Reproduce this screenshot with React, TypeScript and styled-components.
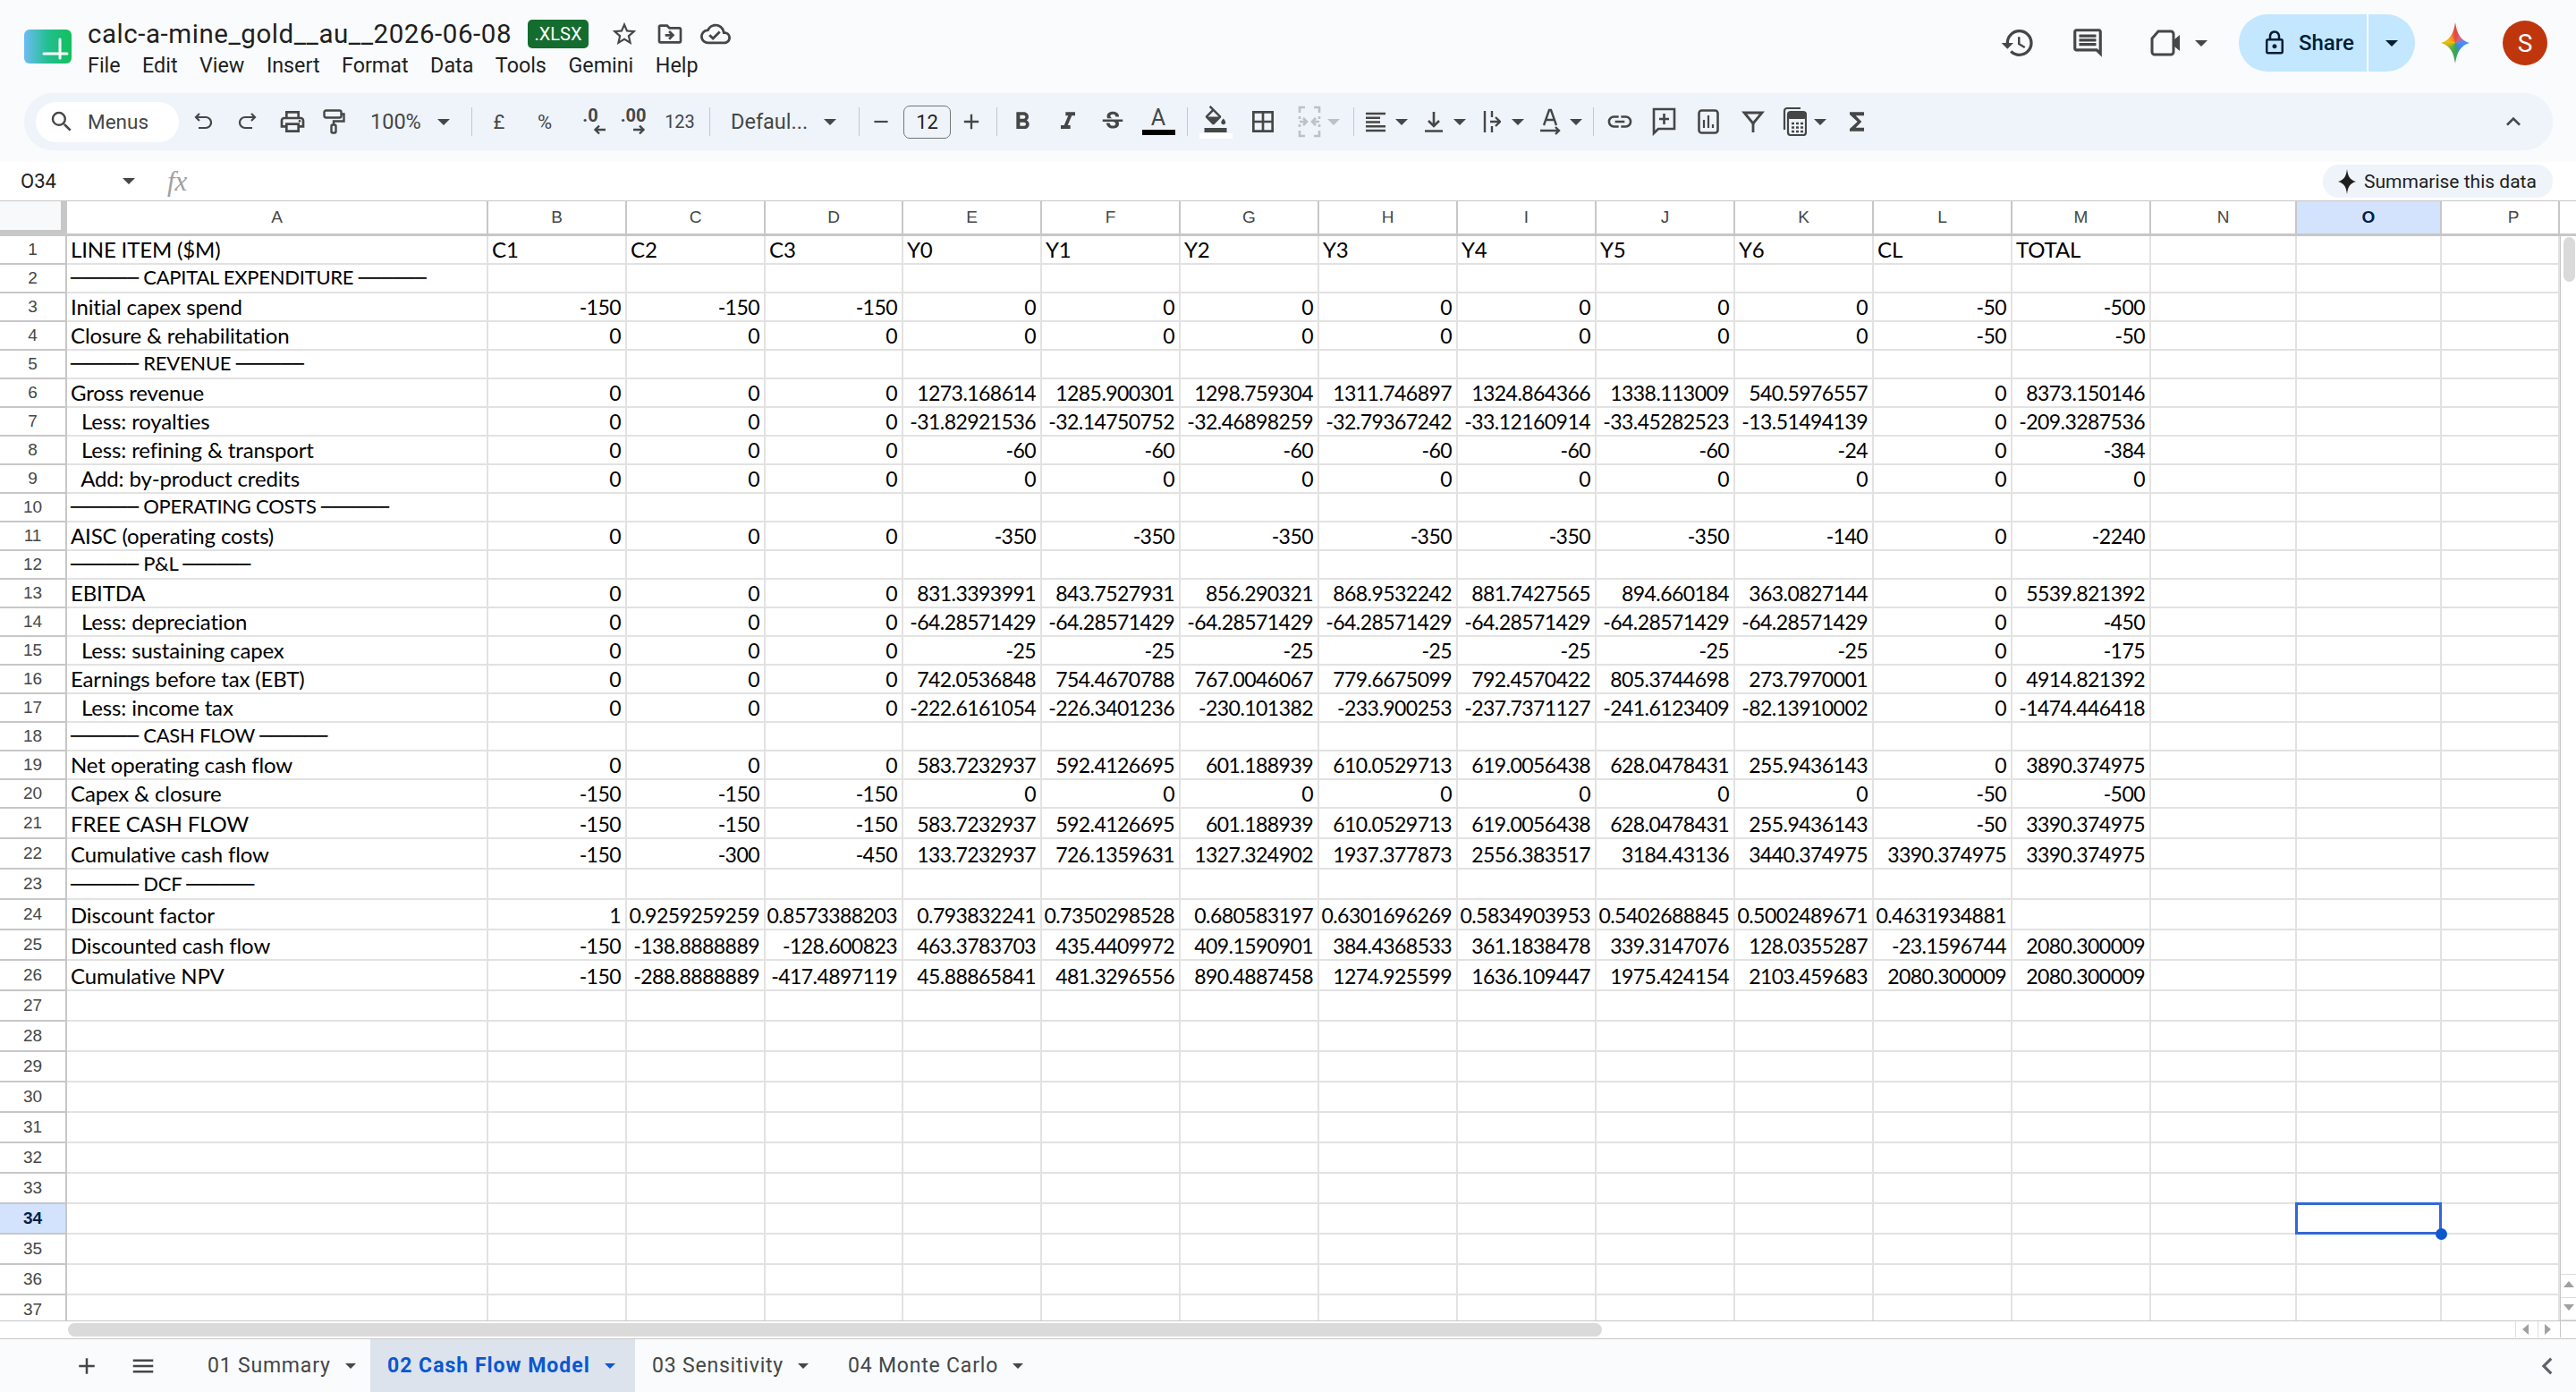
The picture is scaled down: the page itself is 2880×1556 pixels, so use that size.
import React from "react";
import styled, { createGlobalStyle } from "styled-components";
import {
  MdAdd,
  MdBorderAll,
  MdChevronLeft,
  MdFormatBold,
  MdFormatColorFill,
  MdFormatItalic,
  MdFunctions,
  MdHistory,
  MdKeyboardArrowUp,
  MdLink,
  MdMenu,
  MdOutlineCloudDone,
  MdOutlineComment,
  MdOutlineDriveFileMove,
  MdOutlineLock,
  MdOutlinePrint,
  MdRemove,
  MdSearch,
  MdStarBorder,
  MdStrikethroughS,
} from "react-icons/md";

const GlobalStyle = createGlobalStyle`
  html, body {
    margin: 0;
    padding: 0;
    background: #ffffff;
  }
  * {
    box-sizing: border-box;
  }
`;

const uiFont = `Roboto, "Liberation Sans", sans-serif`;
const cellFont = `Lato, "DejaVu Sans", sans-serif`;
const headFont = `"Liberation Sans", Arial, sans-serif`;

const Page = styled.div`
  width: 2880px;
  height: 1556px;
  display: flex;
  flex-direction: column;
  overflow: hidden;
  font-family: ${uiFont};
  color: #444746;
`;

const TopBand = styled.header`
  height: 181px;
  background: #f9fbfd;
  display: flex;
  flex-direction: column;
`;

const TitleBar = styled.div`
  height: 104px;
  padding: 0 32px 0 27px;
  display: flex;
  align-items: center;
`;

const TitleText = styled.div`
  margin-left: 18px;
  display: flex;
  flex-direction: column;
  margin-top: 6px;
`;

const TitleRow = styled.div`
  display: flex;
  align-items: center;
  height: 32px;
`;

const FileName = styled.span`
  font-size: 29.5px;
  color: #1f1f1f;
  letter-spacing: 0.55px;
  width: 492px;
  white-space: nowrap;
`;

const Badge = styled.span`
  width: 68px;
  height: 32px;
  border-radius: 5px;
  background: #146c2e;
  color: #ffffff;
  font-size: 20px;
  display: flex;
  align-items: center;
  justify-content: center;
`;

const RowIcon = styled.span<{ $ml: number }>`
  margin-left: ${(p) => p.$ml}px;
  display: flex;
  color: #444746;
`;

const MenuBar = styled.nav`
  display: flex;
  gap: 24.5px;
  height: 30px;
  margin-top: 4px;
  align-items: center;
  font-size: 23.3px;
  color: #1f1f1f;
`;

const HeadRight = styled.div`
  margin-left: auto;
  display: flex;
  align-items: center;
  margin-top: -8px;
`;

const HeadBtn = styled.span<{ $ml?: number }>`
  width: 50px;
  height: 50px;
  margin-left: ${(p) => p.$ml || 0}px;
  display: flex;
  align-items: center;
  justify-content: center;
  color: #444746;
`;

const VideoCombo = styled.span`
  margin-left: 45px;
  display: flex;
  align-items: center;
  gap: 17px;
  color: #444746;
`;

const Caret = styled.i<{ $c?: string; $s?: number }>`
  display: block;
  flex: none;
  width: 0;
  height: 0;
  border-left: ${(p) => p.$s || 7}px solid transparent;
  border-right: ${(p) => p.$s || 7}px solid transparent;
  border-top: ${(p) => p.$s || 7}px solid ${(p) => p.$c || "#444746"};
`;

const SharePill = styled.div`
  margin-left: 35px;
  width: 197px;
  height: 64px;
  border-radius: 32px;
  background: #c2e7ff;
  color: #001d35;
  display: flex;
  align-items: center;
`;

const ShareMain = styled.span`
  width: 145px;
  height: 64px;
  display: flex;
  align-items: center;
  padding-left: 25px;
  gap: 12px;
  font-size: 24px;
  font-weight: 500;
  border-right: 2px solid #f9fbfd;
`;

const ShareDrop = styled.span`
  flex: 1;
  display: flex;
  justify-content: center;
`;

const GeminiStar = styled.span`
  display: block;
  margin-left: 29px;
  width: 32px;
  height: 46px;
  flex: none;
  background: conic-gradient(#e8453c 0deg, #e0607a 40deg, #4a90f5 90deg, #4285f4 130deg, #34a853 180deg, #7cb342 230deg, #fbbc04 280deg, #f28b30 330deg, #e8453c 360deg);
  clip-path: path("M16 0C18 13 22 20 32 23 22 26 18 33 16 46 14 33 10 26 0 23 10 20 14 13 16 0Z");
`;

const Avatar = styled.span`
  margin-left: 37px;
  width: 50px;
  height: 50px;
  border-radius: 50%;
  background: #bf360c;
  color: #ffffff;
  font-size: 28px;
  display: flex;
  align-items: center;
  justify-content: center;
`;

const Toolbar = styled.div`
  margin: 0 26px 0 27px;
  height: 64px;
  border-radius: 32px;
  background: #eff3fa;
  padding: 0 24px 0 13px;
  display: flex;
  align-items: center;
`;

const MenusBox = styled.div`
  width: 160px;
  height: 45px;
  border-radius: 23px;
  background: #ffffff;
  margin-right: 2px;
  display: flex;
  align-items: center;
  padding-left: 14px;
  gap: 14px;
  font-size: 22.5px;
  color: #444746;
`;

const Tool = styled.span<{ $w: number }>`
  width: ${(p) => p.$w}px;
  height: 48px;
  flex: none;
  display: flex;
  flex-direction: column;
  align-items: center;
  justify-content: center;
  color: #444746;
  font-size: 22px;
`;

const Combo = styled.span<{ $w: number; $pl: number; $gap?: number }>`
  width: ${(p) => p.$w}px;
  height: 48px;
  flex: none;
  display: flex;
  align-items: center;
  padding-left: ${(p) => p.$pl}px;
  gap: ${(p) => p.$gap ?? 10}px;
  color: #444746;
  font-size: 23.5px;
`;

const Slot = styled.span`
  width: 24px;
  display: flex;
  justify-content: center;
  flex: none;
`;

const Sep = styled.span<{ $ml: number; $mr: number }>`
  width: 1px;
  height: 32px;
  flex: none;
  background: #c7c7c7;
  margin: 0 ${(p) => p.$mr}px 0 ${(p) => p.$ml}px;
`;

const SizeBox = styled.span`
  width: 53px;
  height: 37px;
  flex: none;
  margin: 0 7px 0 9px;
  border: 1.5px solid #747775;
  border-radius: 7px;
  display: flex;
  align-items: center;
  justify-content: center;
  font-size: 22px;
  color: #1f1f1f;
`;

const DecimalStack = styled.span`
  display: flex;
  flex-direction: column;
  align-items: flex-end;
  font-size: 20px;
  font-weight: 700;
  line-height: 20px;
  margin-top: -2px;
  color: #444746;
`;

const SmallNum = styled.span`
  font-size: 20px;
`;

const ColorLetter = styled.span`
  font-size: 25px;
  line-height: 24px;
  margin-top: -2px;
`;

const ColorBar = styled.span<{ $bg: string }>`
  display: block;
  width: 37px;
  height: 6px;
  margin-top: 1px;
  background: ${(p) => p.$bg};
`;

const Chevron = styled.span`
  margin-left: auto;
  width: 40px;
  display: flex;
  justify-content: center;
  color: #444746;
`;

const FormulaBar = styled.div`
  height: 44px;
  background: #ffffff;
  padding: 0 26px 0 23px;
  border-bottom: 1.5px solid #c7c7c7;
  display: flex;
  align-items: center;
  flex: none;
`;

const NameBox = styled.span`
  width: 114px;
  font-size: 22px;
  color: #1f1f1f;
`;

const FxMark = styled.span`
  margin-left: 36px;
  font-family: "Liberation Serif", serif;
  font-style: italic;
  font-size: 31px;
  color: #a0a0a0;
`;

const SummaryChip = styled.span`
  margin-left: auto;
  width: 257px;
  height: 37px;
  border-radius: 18px;
  background: #eff3fa;
  display: flex;
  align-items: center;
  padding-left: 17px;
  gap: 9px;
  font-size: 21px;
  color: #1f1f1f;
  white-space: nowrap;
`;

const columns = "75px 471px 155px 155px 154px 155px 155px 155px 155px 155px 155px 155px 155px 155px 163px 162px 132px";

const ColHeader = styled.div`
  height: 39px;
  flex: none;
  display: flex;
  background: #ffffff;
  border-bottom: 3px solid #c7c7c7;
`;

const ColGrid = styled.div`
  display: grid;
  grid-template-columns: ${columns};
`;

const ColCell = styled.div<{ $sel?: boolean; $pl?: number }>`
  display: flex;
  align-items: center;
  justify-content: center;
  padding-left: ${(p) => p.$pl || 0}px;
  border-right: 2px solid #c7c7c7;
  font-family: ${headFont};
  font-size: 19px;
  color: ${(p) => (p.$sel ? "#041e49" : "#444746")};
  font-weight: ${(p) => (p.$sel ? 700 : 400)};
  background: ${(p) => (p.$sel ? "#d3e3fd" : "#ffffff")};
`;

const Corner = styled.div`
  background: #f8f9fa;
  border-right: 7px solid #c7c7c7;
  margin-bottom: -3px;
  border-bottom: 7px solid #c7c7c7;
`;

const Body = styled.div`
  height: 1212px;
  flex: none;
  display: flex;
  overflow: hidden;
  background: #ffffff;
`;

const Rows = styled.div`
  width: 2862px;
  flex: none;
`;

const Row = styled.div<{ $h: number }>`
  display: grid;
  grid-template-columns: ${columns};
  height: ${(p) => p.$h}px;
`;

const RowNum = styled.div<{ $sel?: boolean }>`
  display: flex;
  align-items: center;
  justify-content: center;
  font-family: ${headFont};
  font-size: 19px;
  color: ${(p) => (p.$sel ? "#041e49" : "#444746")};
  font-weight: ${(p) => (p.$sel ? 700 : 400)};
  background: ${(p) => (p.$sel ? "#d3e3fd" : "#ffffff")};
  border-right: 2px solid #c7c7c7;
  border-bottom: 2px solid #c7c7c7;
`;

const Cell = styled.div<{ $right?: boolean; $overflow?: boolean; $num?: boolean }>`
  position: relative;
  display: flex;
  align-items: flex-end;
  justify-content: ${(p) => (p.$right ? "flex-end" : "flex-start")};
  padding: 0 5px 1px 4px;
  border-right: 2px solid #e2e2e2;
  border-bottom: 2px solid #e2e2e2;
  font-family: ${cellFont};
  font-size: ${(p) => (p.$num ? 23 : 24)}px;
  letter-spacing: ${(p) => (p.$num ? -0.55 : -0.15)}px;
  line-height: 28px;
  color: #000000;
  white-space: pre;
  overflow: ${(p) => (p.$overflow ? "visible" : "hidden")};
`;

const SectionTitle = styled.span`
  font-size: 22px;
  letter-spacing: -0.25px;
`;

const Dash = styled.span`
  font-family: "DejaVu Sans", sans-serif;
  font-size: 21px;
  letter-spacing: 0;
`;

const Selection = styled.span`
  position: absolute;
  left: -2px;
  top: -2px;
  right: -2px;
  bottom: -2px;
  border: 3px solid #3367d6;
  z-index: 2;
`;

const Handle = styled.span`
  position: absolute;
  right: -8px;
  bottom: -8px;
  width: 13px;
  height: 13px;
  border-radius: 50%;
  background: #0b57d0;
  z-index: 3;
`;

const VScroll = styled.div`
  flex: 1;
  position: relative;
  border-left: 1.5px solid #c7c7c7;
  background: #ffffff;
`;

const VThumb = styled.span`
  position: absolute;
  left: 3px;
  top: 1px;
  width: 13px;
  height: 50px;
  border-radius: 7px;
  background: #dadada;
`;

const VArrows = styled.span`
  position: absolute;
  left: 0;
  right: 0;
  bottom: 0;
  height: 52px;
  border-top: 1px solid #dadce0;
  display: flex;
  flex-direction: column;
`;

const ArrowCell = styled.span`
  flex: 1;
  display: flex;
  align-items: center;
  justify-content: center;
  border-bottom: 1px solid #dadce0;
`;

const HScroll = styled.div`
  height: 21px;
  flex: none;
  position: relative;
  border-top: 1.5px solid #c7c7c7;
  border-bottom: 1.5px solid #c7c7c7;
  background: #ffffff;
`;

const HThumb = styled.span`
  position: absolute;
  left: 76px;
  top: 2px;
  width: 1715px;
  height: 15px;
  border-radius: 8px;
  background: #dadada;
`;

const HArrows = styled.span`
  position: absolute;
  left: 2812px;
  top: 0;
  width: 51px;
  height: 18px;
  display: flex;
  border-left: 1px solid #dadce0;
  border-right: 1px solid #c7c7c7;
`;

const HArrow = styled.span`
  flex: 1;
  display: flex;
  align-items: center;
  justify-content: center;
  & + & {
    border-left: 1px solid #dadce0;
  }
`;

const TabBar = styled.footer`
  flex: 1;
  background: #f9fbfd;
  display: flex;
  align-items: stretch;
  padding-left: 80px;
  color: #444746;
`;

const TabTool = styled.span<{ $w: number }>`
  width: ${(p) => p.$w}px;
  flex: none;
  display: flex;
  align-items: center;
  justify-content: center;
  color: #444746;
`;

const Tab = styled.span<{ $active?: boolean; $w: number; $pl: number }>`
  width: ${(p) => p.$w}px;
  flex: none;
  display: flex;
  align-items: center;
  padding-left: ${(p) => p.$pl}px;
  gap: 16px;
  font-size: 23px;
  letter-spacing: ${(p) => (p.$active ? 1 : 0.8)}px;
  white-space: nowrap;
  font-weight: ${(p) => (p.$active ? 700 : 400)};
  color: ${(p) => (p.$active ? "#0b57d0" : "#444746")};
  background: ${(p) => (p.$active ? "#dce3ec" : "transparent")};
`;

const TabEnd = styled.span`
  margin-left: auto;
  width: 64px;
  display: flex;
  align-items: center;
  justify-content: center;
  color: #5f6368;
`;

const ink = "#444746";

const SheetsLogo = () => (
  <svg width="53" height="38" viewBox="0 0 53 38" style={{ flex: "none" }}>
    <defs>
      <linearGradient id="sheetGrad" x1="0" y1="0" x2="1" y2="0">
        <stop offset="0" stopColor="#6dbcf3" />
        <stop offset="0.5" stopColor="#22bf90" />
        <stop offset="1" stopColor="#12c05a" />
      </linearGradient>
    </defs>
    <rect width="53" height="38" rx="6" fill="url(#sheetGrad)" />
    <path d="M22 27h26M40 11v21" stroke="#fff" strokeWidth="3" fill="none" strokeLinecap="round" />
  </svg>
);

const VideoIcon = () => (
  <svg width="33" height="30" viewBox="0 0 33 30" style={{ flex: "none" }}>
    <path d="M9 2h14a3 3 0 0 1 3 3v20a3 3 0 0 1-3 3H5a3 3 0 0 1-3-3V10Z" fill="none" stroke={ink} strokeWidth="3" />
    <path d="M26 12l7-6v18l-7-6Z" fill={ink} />
  </svg>
);

const Spark = () => (
  <svg width="20" height="28" viewBox="0 0 20 28" style={{ flex: "none" }}>
    <path d="M10 0C11 8 13 12 20 14 13 16 11 20 10 28 9 20 7 16 0 14 7 12 9 8 10 0Z" fill="#1f1f1f" />
  </svg>
);

const UndoIcon = ({ flip }: { flip?: boolean }) => (
  <svg width="20" height="20" viewBox="0 0 20 20" fill="none" stroke={ink} strokeWidth="2.2" style={flip ? { transform: "scaleX(-1)" } : undefined}>
    <path d="M6 1 2 5l4 4M2 5h11a5.5 5.5 0 0 1 0 12H5" />
  </svg>
);

const PaintIcon = () => (
  <svg width="25" height="28" viewBox="0 0 25 28" fill="none" stroke={ink} strokeWidth="2.4">
    <rect x="1.5" y="1.5" width="19" height="8" rx="2" />
    <path d="M21 5.5h2.5v8H12v4" />
    <rect x="9.5" y="17.5" width="5" height="9" rx="1.5" />
  </svg>
);

const ArrowUnder = ({ left }: { left?: boolean }) => (
  <svg width="14" height="12" viewBox="0 0 14 12" style={left ? { marginRight: -8 } : undefined}>
    <path d={left ? "M14 6H3M7 1.5 2.5 6 7 10.5" : "M0 6h11M7 1.5 11.5 6 7 10.5"} stroke={ink} strokeWidth="2.4" fill="none" />
  </svg>
);

const MergeIcon = () => (
  <svg width="26" height="36" viewBox="0 0 26 36" fill="none" stroke="#bdc1c6" strokeWidth="2.6" style={{ flex: "none" }}>
    <path d="M8 2H2v6M18 2h6v6M8 34H2v-6M18 34h6v-6" />
    <path d="M2 18h7M6 14l4 4-4 4M24 18h-7M20 14l-4 4 4 4" />
    <path d="M2 12v3M24 12v3M2 21v3M24 21v3" />
  </svg>
);

const AlignIcon = () => (
  <svg width="24" height="23" viewBox="0 0 24 23" fill="none" stroke={ink} strokeWidth="2.6">
    <path d="M1 2h22M1 6.8h16M1 11.5h16M1 16.2h22M1 21h22" />
  </svg>
);

const ValignIcon = () => (
  <svg width="20" height="24" viewBox="0 0 20 24" fill="none" stroke={ink} strokeWidth="2.6">
    <path d="M10 1v16M4 11l6 6 6-6M0 22.5h20" />
  </svg>
);

const WrapIcon = () => (
  <svg width="20" height="26" viewBox="0 0 20 26" fill="none" stroke={ink} strokeWidth="2.4">
    <path d="M2 1v24M10 1v7M10 18v7M8 13h10M14 8l5 5-5 5" />
  </svg>
);

const RotateIcon = () => (
  <svg width="24" height="30" viewBox="0 0 24 30" fill="none" stroke={ink} strokeWidth="2.4">
    <path d="M5 19 11 2h2l6 17M7.5 13h9" />
    <path d="M1 25h21M18 21l4 4-4 4" />
  </svg>
);

const AddCommentIcon = () => (
  <svg width="27" height="32" viewBox="0 0 27 32" fill="none" stroke={ink} strokeWidth="2.6">
    <path d="M2 2h23v22H7l-5 5Z" />
    <path d="M13.5 7v12M8 13h11" />
  </svg>
);

const ChartIcon = () => (
  <svg width="24" height="28" viewBox="0 0 24 28" fill="none" stroke={ink} strokeWidth="2.6">
    <rect x="1.5" y="1.5" width="21" height="25" rx="3" />
    <path d="M7 21v-9M12 21V7M17 21v-4" strokeWidth="2.2" />
  </svg>
);

const FilterIcon = () => (
  <svg width="26" height="26" viewBox="0 0 26 26" fill="none" stroke={ink} strokeWidth="2.8">
    <path d="M3 3h20L13 15Z" />
    <path d="M13 15v10" />
  </svg>
);

const CalcIcon = () => (
  <svg width="27" height="32" viewBox="0 0 27 32" fill="none" stroke={ink} strokeWidth="2.2" style={{ flex: "none" }}>
    <path d="M2 25V4a3 3 0 0 1 3-3h15" />
    <rect x="6" y="5" width="20" height="26" rx="3" />
    <rect x="6" y="5" width="20" height="8" rx="2" fill={ink} stroke="none" />
    <path d="M10 18h3M15 18h3M20 18h3M10 22.5h3M15 22.5h3M20 22.5h3M10 27h3M15 27h3M20 27h3" strokeWidth="2.6" />
  </svg>
);

const TextColorIcon = () => (
  <>
    <ColorLetter>A</ColorLetter>
    <ColorBar $bg="#000000" />
  </>
);

const ArrowTri = ({ dir }: { dir: "up" | "down" | "left" | "right" }) => {
  const d = {
    up: "M0 8 6 1l6 7Z",
    down: "M0 1h12L6 8Z",
    left: "M8 0v12L1 6Z",
    right: "M1 0v12l7-6Z",
  }[dir];
  return (
    <svg width="12" height="12" viewBox="0 0 12 12">
      <path d={d} fill="#a0a0a0" />
    </svg>
  );
};

const colLetters = ["A", "B", "C", "D", "E", "F", "G", "H", "I", "J", "K", "L", "M", "N", "O", "P"];

type Line = { label: string; values?: (string | number)[]; text?: boolean; section?: boolean };

const sheet: Line[] = [
  { label: "LINE ITEM ($M)", text: true, values: ["C1", "C2", "C3", "Y0", "Y1", "Y2", "Y3", "Y4", "Y5", "Y6", "CL", "TOTAL"] },
  { label: "CAPITAL EXPENDITURE", section: true },
  { label: "Initial capex spend", values: [-150, -150, -150, 0, 0, 0, 0, 0, 0, 0, -50, -500] },
  { label: "Closure & rehabilitation", values: [0, 0, 0, 0, 0, 0, 0, 0, 0, 0, -50, -50] },
  { label: "REVENUE", section: true },
  { label: "Gross revenue", values: [0, 0, 0, 1273.168614, 1285.900301, 1298.759304, 1311.746897, 1324.864366, 1338.113009, 540.5976557, 0, 8373.150146] },
  { label: "  Less: royalties", values: [0, 0, 0, -31.82921536, -32.14750752, -32.46898259, -32.79367242, -33.12160914, -33.45282523, -13.51494139, 0, -209.3287536] },
  { label: "  Less: refining & transport", values: [0, 0, 0, -60, -60, -60, -60, -60, -60, -24, 0, -384] },
  { label: "  Add: by-product credits", values: [0, 0, 0, 0, 0, 0, 0, 0, 0, 0, 0, 0] },
  { label: "OPERATING COSTS", section: true },
  { label: "AISC (operating costs)", values: [0, 0, 0, -350, -350, -350, -350, -350, -350, -140, 0, -2240] },
  { label: "P&L", section: true },
  { label: "EBITDA", values: [0, 0, 0, 831.3393991, 843.7527931, 856.290321, 868.9532242, 881.7427565, 894.660184, 363.0827144, 0, 5539.821392] },
  { label: "  Less: depreciation", values: [0, 0, 0, -64.28571429, -64.28571429, -64.28571429, -64.28571429, -64.28571429, -64.28571429, -64.28571429, 0, -450] },
  { label: "  Less: sustaining capex", values: [0, 0, 0, -25, -25, -25, -25, -25, -25, -25, 0, -175] },
  { label: "Earnings before tax (EBT)", values: [0, 0, 0, 742.0536848, 754.4670788, 767.0046067, 779.6675099, 792.4570422, 805.3744698, 273.7970001, 0, 4914.821392] },
  { label: "  Less: income tax", values: [0, 0, 0, -222.6161054, -226.3401236, -230.101382, -233.900253, -237.7371127, -241.6123409, -82.13910002, 0, -1474.446418] },
  { label: "CASH FLOW", section: true },
  { label: "Net operating cash flow", values: [0, 0, 0, 583.7232937, 592.4126695, 601.188939, 610.0529713, 619.0056438, 628.0478431, 255.9436143, 0, 3890.374975] },
  { label: "Capex & closure", values: [-150, -150, -150, 0, 0, 0, 0, 0, 0, 0, -50, -500] },
  { label: "FREE CASH FLOW", values: [-150, -150, -150, 583.7232937, 592.4126695, 601.188939, 610.0529713, 619.0056438, 628.0478431, 255.9436143, -50, 3390.374975] },
  { label: "Cumulative cash flow", values: [-150, -300, -450, 133.7232937, 726.1359631, 1327.324902, 1937.377873, 2556.383517, 3184.43136, 3440.374975, 3390.374975, 3390.374975] },
  { label: "DCF", section: true },
  { label: "Discount factor", values: [1, 0.9259259259, 0.8573388203, 0.793832241, 0.7350298528, 0.680583197, 0.6301696269, 0.5834903953, 0.5402688845, 0.5002489671, 0.4631934881, ""] },
  { label: "Discounted cash flow", values: [-150, -138.8888889, -128.600823, 463.3783703, 435.4409972, 409.1590901, 384.4368533, 361.1838478, 339.3147076, 128.0355287, -23.1596744, 2080.300009] },
  { label: "Cumulative NPV", values: [-150, -288.8888889, -417.4897119, 45.88865841, 481.3296556, 890.4887458, 1274.925599, 1636.109447, 1975.424154, 2103.459683, 2080.300009, 2080.300009] },
];

const rowCount = 37;
const selectedRow = 34;
const selectedCol = "O";
const rule = "──────";

const SheetRow = ({ n }: { n: number }) => {
  const line = sheet[n - 1];
  return (
    <Row $h={n <= 20 ? 32 : 34}>
      <RowNum $sel={n === selectedRow}>{n}</RowNum>
      {colLetters.map((letter, i) => {
        if (i === 0) {
          return (
            <Cell key={letter} $overflow={line?.section}>
              {line?.section ? (
                <SectionTitle>
                  <Dash>{rule}</Dash> {line.label} <Dash>{rule}</Dash>
                </SectionTitle>
              ) : (
                line?.label
              )}
            </Cell>
          );
        }
        const value = line?.values?.[i - 1];
        const isSel = n === selectedRow && letter === selectedCol;
        return (
          <Cell key={letter} $right={!line?.text} $num={!line?.text} $overflow={isSel}>
            {value}
            {isSel && (
              <>
                <Selection />
                <Handle />
              </>
            )}
          </Cell>
        );
      })}
    </Row>
  );
};

export default function App() {
  const rows = Array.from({ length: rowCount }, (_, i) => i + 1);
  return (
    <>
      <GlobalStyle />
      <Page>
        <TopBand>
          <TitleBar>
            <SheetsLogo />
            <TitleText>
              <TitleRow>
                <FileName>calc-a-mine_gold__au__2026-06-08</FileName>
                <Badge>.XLSX</Badge>
                <RowIcon $ml={24}>
                  <MdStarBorder size={32} />
                </RowIcon>
                <RowIcon $ml={19}>
                  <MdOutlineDriveFileMove size={32} />
                </RowIcon>
                <RowIcon $ml={18}>
                  <MdOutlineCloudDone size={34} />
                </RowIcon>
              </TitleRow>
              <MenuBar>
                <span>File</span>
                <span>Edit</span>
                <span>View</span>
                <span>Insert</span>
                <span>Format</span>
                <span>Data</span>
                <span>Tools</span>
                <span>Gemini</span>
                <span>Help</span>
              </MenuBar>
            </TitleText>
            <HeadRight>
              <HeadBtn>
                <MdHistory size={40} />
              </HeadBtn>
              <HeadBtn $ml={28}>
                <MdOutlineComment size={38} />
              </HeadBtn>
              <VideoCombo>
                <VideoIcon />
                <Caret />
              </VideoCombo>
              <SharePill>
                <ShareMain>
                  <MdOutlineLock size={30} />
                  Share
                </ShareMain>
                <ShareDrop>
                  <Caret $c="#001d35" />
                </ShareDrop>
              </SharePill>
              <GeminiStar />
              <Avatar>S</Avatar>
            </HeadRight>
          </TitleBar>
          <Toolbar>
            <MenusBox>
              <MdSearch size={30} />
              Menus
            </MenusBox>
            <Tool $w={50}>
              <UndoIcon />
            </Tool>
            <Tool $w={50}>
              <UndoIcon flip />
            </Tool>
            <Tool $w={49}>
              <MdOutlinePrint size={32} />
            </Tool>
            <Tool $w={45}>
              <PaintIcon />
            </Tool>
            <Combo $w={123} $pl={18} $gap={18}>
              100%
              <Caret />
            </Combo>
            <Sep $ml={8} $mr={8} />
            <Tool $w={44}>£</Tool>
            <Tool $w={58}>%</Tool>
            <Tool $w={44}>
              <DecimalStack>
                .0
                <ArrowUnder left />
              </DecimalStack>
            </Tool>
            <Tool $w={52}>
              <DecimalStack>
                .00
                <ArrowUnder />
              </DecimalStack>
            </Tool>
            <Tool $w={52}>
              <SmallNum>123</SmallNum>
            </Tool>
            <Sep $ml={7} $mr={7} />
            <Combo $w={151} $pl={16} $gap={18}>
              Defaul...
              <Caret />
            </Combo>
            <Sep $ml={8} $mr={8} />
            <Tool $w={32}>
              <MdRemove size={26} />
            </Tool>
            <SizeBox>12</SizeBox>
            <Tool $w={32}>
              <MdAdd size={28} />
            </Tool>
            <Sep $ml={12} $mr={3} />
            <Tool $w={50}>
              <MdFormatBold size={32} />
            </Tool>
            <Tool $w={52}>
              <MdFormatItalic size={32} />
            </Tool>
            <Tool $w={48}>
              <MdStrikethroughS size={30} />
            </Tool>
            <Tool $w={54}>
              <TextColorIcon />
            </Tool>
            <Sep $ml={5} $mr={5} />
            <Tool $w={52}>
              <MdFormatColorFill size={30} />
              <ColorBar $bg="#ffffff" />
            </Tool>
            <Tool $w={53}>
              <MdBorderAll size={32} />
            </Tool>
            <Combo $w={70} $pl={13} $gap={7}>
              <MergeIcon />
              <Caret $c="#bdc1c6" />
            </Combo>
            <Sep $ml={5} $mr={5} />
            <Combo $w={65} $pl={7}>
              <Slot>
                <AlignIcon />
              </Slot>
              <Caret />
            </Combo>
            <Combo $w={65} $pl={7}>
              <Slot>
                <ValignIcon />
              </Slot>
              <Caret />
            </Combo>
            <Combo $w={65} $pl={7}>
              <Slot>
                <WrapIcon />
              </Slot>
              <Caret />
            </Combo>
            <Combo $w={65} $pl={7}>
              <Slot>
                <RotateIcon />
              </Slot>
              <Caret />
            </Combo>
            <Sep $ml={2} $mr={5} />
            <Tool $w={48}>
              <MdLink size={32} />
            </Tool>
            <Tool $w={50}>
              <AddCommentIcon />
            </Tool>
            <Tool $w={50}>
              <ChartIcon />
            </Tool>
            <Tool $w={50}>
              <FilterIcon />
            </Tool>
            <Combo $w={66} $pl={9} $gap={10}>
              <Slot>
                <CalcIcon />
              </Slot>
              <Caret />
            </Combo>
            <Tool $w={50}>
              <MdFunctions size={32} />
            </Tool>
            <Chevron>
              <MdKeyboardArrowUp size={32} />
            </Chevron>
          </Toolbar>
        </TopBand>

        <FormulaBar>
          <NameBox>O34</NameBox>
          <Caret />
          <FxMark>fx</FxMark>
          <SummaryChip>
            <Spark />
            Summarise this data
          </SummaryChip>
        </FormulaBar>

        <ColHeader>
          <ColGrid>
            <Corner />
            {colLetters.map((letter) => (
              <ColCell key={letter} $sel={letter === selectedCol} $pl={letter === "P" ? 30 : 0}>
                {letter}
              </ColCell>
            ))}
          </ColGrid>
        </ColHeader>

        <Body>
          <Rows>
            {rows.map((n) => (
              <SheetRow key={n} n={n} />
            ))}
          </Rows>
          <VScroll>
            <VThumb />
            <VArrows>
              <ArrowCell>
                <ArrowTri dir="up" />
              </ArrowCell>
              <ArrowCell>
                <ArrowTri dir="down" />
              </ArrowCell>
            </VArrows>
          </VScroll>
        </Body>

        <HScroll>
          <HThumb />
          <HArrows>
            <HArrow>
              <ArrowTri dir="left" />
            </HArrow>
            <HArrow>
              <ArrowTri dir="right" />
            </HArrow>
          </HArrows>
        </HScroll>

        <TabBar>
          <TabTool $w={34}>
            <MdAdd size={30} />
          </TabTool>
          <TabTool $w={92}>
            <MdMenu size={30} />
          </TabTool>
          <Tab $w={208} $pl={26}>
            01 Summary
            <Caret $s={6} />
          </Tab>
          <Tab $active $w={296} $pl={19}>
            02 Cash Flow Model
            <Caret $s={6} $c="#0b57d0" />
          </Tab>
          <Tab $w={219} $pl={19}>
            03 Sensitivity
            <Caret $s={6} />
          </Tab>
          <Tab $w={220} $pl={19}>
            04 Monte Carlo
            <Caret $s={6} />
          </Tab>
          <TabEnd>
            <MdChevronLeft size={38} />
          </TabEnd>
        </TabBar>
      </Page>
    </>
  );
}
